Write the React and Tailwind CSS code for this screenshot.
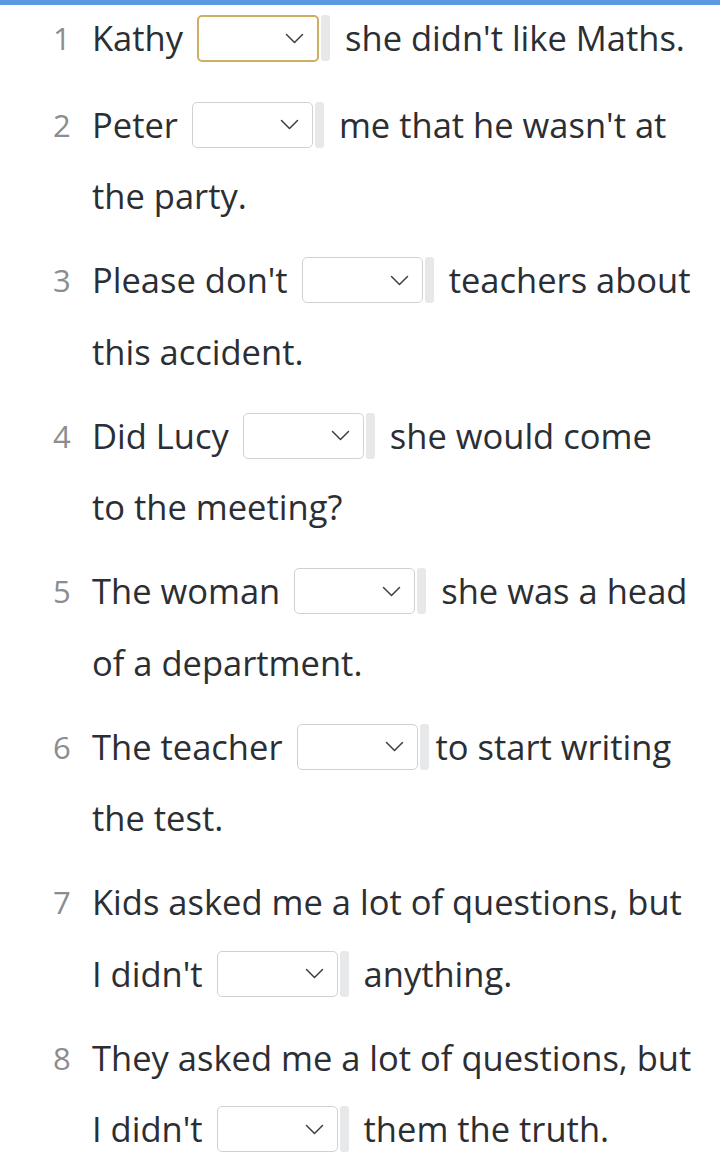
import React from "react";

const SEL = { select: true };

// Each item: number + lines; each line is a list of text runs and dropdown slots.
const items = [
  { n: 1, lines: [["Kathy", { select: true, focused: true }, "she didn't like Maths."]] },
  { n: 2, lines: [["Peter", SEL, "me that he wasn't at"], ["the party."]] },
  { n: 3, lines: [["Please don't", SEL, "teachers about"], ["this accident."]] },
  { n: 4, lines: [["Did Lucy", SEL, "she would come"], ["to the meeting?"]] },
  { n: 5, lines: [["The woman", SEL, "she was a head"], ["of a department."]] },
  { n: 6, lines: [["The teacher", { select: true, tight: true }, "to start writing"], ["the test."]] },
  { n: 7, lines: [["Kids asked me a lot of questions, but"], ["I didn't", SEL, "anything."]] },
  { n: 8, lines: [["They asked me a lot of questions, but"], ["I didn't", SEL, "them the truth."]] },
];

function Chevron() {
  return (
    <svg width="19" height="11" viewBox="0 0 19 11" fill="none" className="shrink-0">
      <path d="M1.5 1.5l8 8 8-8" stroke="#3a3d42" strokeWidth="1.5" strokeLinecap="round" strokeLinejoin="round" />
    </svg>
  );
}

function Dropdown({ focused }) {
  return (
    <div className="flex items-center gap-[2px] ml-[14px]">
      <div
        className={
          focused
            ? "w-[122px] h-[47px] rounded-[5px] border-2 border-[#cdae62] bg-white flex items-center justify-end pr-[13px]"
            : "w-[121px] h-[46px] rounded-[5px] border-[1.5px] border-[#cfd1d3] bg-white flex items-center justify-end pr-[13px]"
        }
      >
        <Chevron />
      </div>
      <div className="w-[9px] h-[46px] rounded-[3px] bg-[#e6e8ea]" />
    </div>
  );
}

function Line({ parts, height }) {
  let afterTight = false;
  return (
    <div className={"flex items-center whitespace-nowrap " + height}>
      {parts.map((p, i) => {
        if (typeof p === "string") {
          const gap = i === 0 ? "" : afterTight ? "ml-[7px]" : "ml-[15px]";
          return (
            <span key={i} className={gap}>
              {p}
            </span>
          );
        }
        afterTight = !!p.tight;
        return <Dropdown key={i} focused={p.focused} />;
      })}
    </div>
  );
}

export default function App() {
  return (
    <div
      className="w-[720px] h-[1175px] bg-white flex flex-col overflow-hidden"
      style={{ fontFamily: '"Open Sans", "Noto Sans", sans-serif' }}
    >
      <div className="h-[5px] bg-[#5b9ae2] shrink-0" />
      <div className="flex-1 flex flex-col">
        {items.map((it, idx) => (
          <div key={it.n} className={"flex " + (idx === 0 ? "mb-[18px]" : "mb-[12.5px]")}>
            <div
              className={
                "w-[39px] ml-[53px] text-[31px] text-[#8b8d90] flex items-center " +
                (idx === 0 ? "h-[66px]" : "h-[71.5px]")
              }
            >
              {it.n}
            </div>
            <div className="flex flex-col text-[34.5px] text-[#2b2e33]">
              {it.lines.map((ln, j) => (
                <Line key={j} parts={ln} height={idx === 0 ? "h-[66px]" : "h-[71.5px]"} />
              ))}
            </div>
          </div>
        ))}
      </div>
      <div className="h-[6px] bg-[#e9ecee] shrink-0" />
    </div>
  );
}
